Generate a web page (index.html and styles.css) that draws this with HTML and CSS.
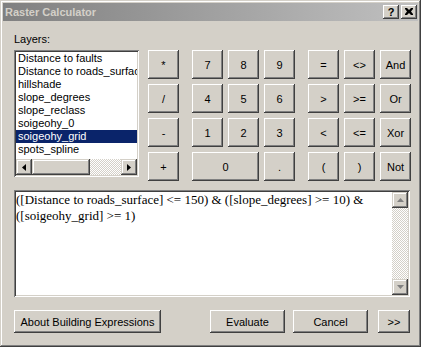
FILE: index.html
```html
<!DOCTYPE html>
<html lang="en">
<head>
    <meta charset="UTF-8">
    <title>Raster Calculator</title>
    <link rel="stylesheet" href="styles.css">
</head>
<body>
    <div class="window">
        <div class="titlebar">
            <span class="title">Raster Calculator</span>
            <div class="title-buttons">
                <button class="tbtn help">?</button>
                <button class="tbtn close">
                    <svg width="8" height="7" viewBox="0 0 8 7"><path d="M0 0h2l2 2 2-2h2v1l-2 2.5 2 2.5v1h-2l-2-2-2 2h-2v-1l2-2.5-2-2.5z" fill="#000"/></svg>
                </button>
            </div>
        </div>
        <div class="content">
            <div class="top">
                <div class="layers">
                    <div class="label">Layers:</div>
                    <div class="listbox">
                        <div class="items">
                            <div class="item">Distance to faults</div>
                            <div class="item">Distance to roads_surface</div>
                            <div class="item">hillshade</div>
                            <div class="item">slope_degrees</div>
                            <div class="item">slope_reclass</div>
                            <div class="item">soigeohy_0</div>
                            <div class="item selected">soigeohy_grid</div>
                            <div class="item">spots_spline</div>
                        </div>
                        <div class="hscroll">
                            <div class="sbtn"><svg width="4" height="7" viewBox="0 0 4 7"><path d="M4 0v7L0 3.5z" fill="#000"/></svg></div>
                            <div class="thumb"></div>
                            <div class="track"></div>
                            <div class="sbtn"><svg width="4" height="7" viewBox="0 0 4 7"><path d="M0 0v7l4-3.5z" fill="#000"/></svg></div>
                        </div>
                    </div>
                </div>
                <div class="keypad">
                    <div class="group ops">
                        <button class="btn">*</button>
                        <button class="btn">/</button>
                        <button class="btn">-</button>
                        <button class="btn">+</button>
                    </div>
                    <div class="group digits">
                        <button class="btn">7</button>
                        <button class="btn">8</button>
                        <button class="btn">9</button>
                        <button class="btn">4</button>
                        <button class="btn">5</button>
                        <button class="btn">6</button>
                        <button class="btn">1</button>
                        <button class="btn">2</button>
                        <button class="btn">3</button>
                        <button class="btn wide">0</button>
                        <button class="btn">.</button>
                    </div>
                    <div class="group digits">
                        <button class="btn">=</button>
                        <button class="btn">&lt;&gt;</button>
                        <button class="btn">And</button>
                        <button class="btn">&gt;</button>
                        <button class="btn">&gt;=</button>
                        <button class="btn">Or</button>
                        <button class="btn">&lt;</button>
                        <button class="btn">&lt;=</button>
                        <button class="btn">Xor</button>
                        <button class="btn">(</button>
                        <button class="btn">)</button>
                        <button class="btn">Not</button>
                    </div>
                </div>
            </div>
            <div class="expr">
                <div class="expr-text">([Distance to roads_surface] &lt;= 150) &amp; ([slope_degrees] &gt;= 10) &amp; ([soigeohy_grid] &gt;= 1)</div>
                <div class="vscroll">
                    <div class="sbtn"><svg width="7" height="4" viewBox="0 0 7 4"><path d="M3.5 0L7 4H0z" fill="#808080"/></svg></div>
                    <div class="track"></div>
                    <div class="sbtn"><svg width="7" height="4" viewBox="0 0 7 4"><path d="M0 0h7L3.5 4z" fill="#808080"/></svg></div>
                </div>
            </div>
            <div class="actions">
                <button class="btn about">About Building Expressions</button>
                <button class="btn evaluate">Evaluate</button>
                <button class="btn cancel">Cancel</button>
                <button class="btn more">&gt;&gt;</button>
            </div>
        </div>
    </div>
</body>
</html>
```

FILE: styles.css
```css
* {
    box-sizing: border-box;
}
body {
    margin: 0;
    font-family: "Liberation Sans", Arial, sans-serif;
    font-size: 11px;
    background: #d4d0c8;
}
.window {
    width: 421px;
    height: 347px;
    padding: 3px;
    background: #d4d0c8;
    box-shadow: inset -1px -1px #404040, inset 1px 1px #d4d0c8, inset -2px -2px #808080, inset 2px 2px #fff;
}
.titlebar {
    height: 18px;
    display: flex;
    align-items: center;
    justify-content: space-between;
    background: linear-gradient(90deg, #808080, #c0c0c0);
    padding: 0 1px 0 2px;
}
.title {
    color: #d4d0c8;
    font-weight: bold;
    font-size: 11px;
}
.title-buttons {
    display: flex;
    gap: 2px;
}
button {
    font-family: inherit;
    font-size: 11px;
    color: #000;
    background: #d4d0c8;
    border: none;
    padding: 0;
    margin: 0;
    box-shadow: inset -1px -1px #404040, inset 1px 1px #fff, inset -2px -2px #808080, inset 2px 2px #d4d0c8;
}
.tbtn {
    width: 16px;
    height: 14px;
    display: flex;
    align-items: center;
    justify-content: center;
    font-weight: bold;
    padding-bottom: 1px;
}
.content {
    padding: 12px 0 0 11px;
}
.top {
    display: flex;
}
.layers {
    width: 125px;
}
.label {
    height: 17px;
    line-height: 13px;
}
.sunken {
    box-shadow: inset 1px 1px #808080, inset -1px -1px #fff, inset 2px 2px #404040, inset -2px -2px #d4d0c8;
}
.listbox {
    height: 127px;
    padding: 2px;
    background: #fff;
    display: flex;
    flex-direction: column;
    box-shadow: inset 1px 1px #808080, inset -1px -1px #fff, inset 2px 2px #404040, inset -2px -2px #d4d0c8;
}
.items {
    flex: 1;
    overflow: hidden;
}
.item {
    height: 13px;
    line-height: 13px;
    padding-left: 2px;
    white-space: nowrap;
    overflow: hidden;
}
.item.selected {
    background: #0a246a;
    color: #fff;
}
.hscroll {
    height: 16px;
    display: flex;
}
.sbtn {
    width: 16px;
    height: 16px;
    display: flex;
    align-items: center;
    justify-content: center;
    background: #d4d0c8;
    box-shadow: inset -1px -1px #404040, inset 1px 1px #d4d0c8, inset -2px -2px #808080, inset 2px 2px #fff;
}
.thumb {
    width: 58px;
    background: #d4d0c8;
    box-shadow: inset -1px -1px #404040, inset 1px 1px #d4d0c8, inset -2px -2px #808080, inset 2px 2px #fff;
}
.track {
    flex: 1;
    background-color: #d4d0c8;
    background-image: repeating-conic-gradient(#fff 0 25%, #d4d0c8 0 50%);
    background-size: 2px 2px;
}
.keypad {
    display: flex;
    gap: 13px;
    margin: 17px 0 0 9px;
}
.group {
    display: grid;
    grid-auto-rows: 29px;
    gap: 5px;
}
.ops {
    grid-template-columns: 31px;
}
.digits {
    grid-template-columns: repeat(3, 31px);
}
.wide {
    grid-column: span 2;
}
.expr {
    width: 396px;
    height: 107px;
    margin-top: 9px;
    padding: 2px;
    background: #fff;
    display: flex;
    box-shadow: inset 1px 1px #808080, inset -1px -1px #fff, inset 2px 2px #404040, inset -2px -2px #d4d0c8;
}
.expr-text {
    flex: 1;
    font-family: "Liberation Serif", "Times New Roman", serif;
    font-size: 13px;
    line-height: 16px;
    padding: 0 4px 0 0;
}
.vscroll {
    width: 16px;
    display: flex;
    flex-direction: column;
}
.actions {
    display: flex;
    margin-top: 13px;
    width: 396px;
}
.actions .btn {
    height: 23px;
}
.about {
    width: 147px;
}
.evaluate {
    width: 75px;
    margin-left: auto;
}
.cancel {
    width: 75px;
    margin-left: 8px;
}
.more {
    width: 32px;
    margin-left: 10px;
}
```
